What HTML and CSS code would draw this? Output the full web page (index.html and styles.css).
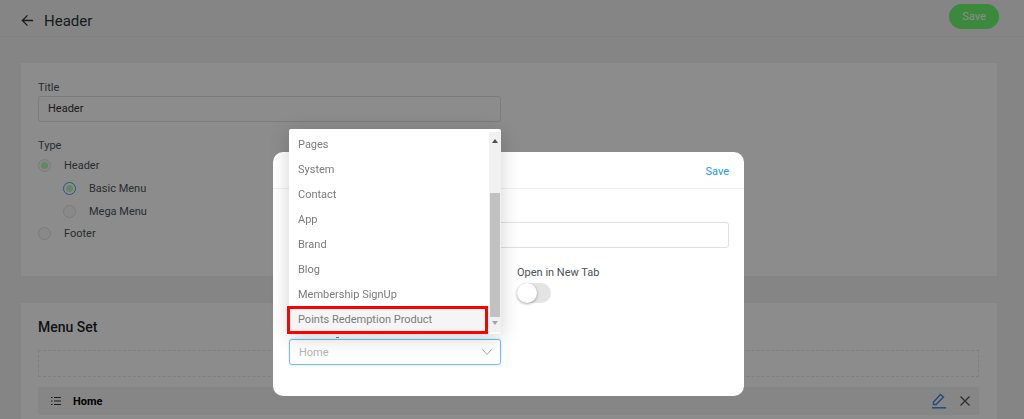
FILE: index.html
```html
<!DOCTYPE html>
<html lang="en">
<head>
    <meta charset="UTF-8">
    <meta name="viewport" content="width=device-width, initial-scale=1.0">
    <title>Header</title>
    <link rel="stylesheet" href="styles.css">
</head>
<body>
    <div class="page">
        <div class="top-bar">
            <div class="top-title">
                <svg class="back-icon" width="13" height="13" viewBox="0 0 14 14"><path d="M13 7H2M7 1.500 1.500 7 7 12.500" fill="none" stroke="#2b3238" stroke-width="1.400"/></svg>
                <span>Header</span>
            </div>
            <button class="save-btn">Save</button>
        </div>

        <div class="card card-form">
            <label class="field-label">Title</label>
            <div class="text-input">Header</div>
            <label class="field-label type-label">Type</label>
            <div class="radio-row"><span class="radio checked"></span>Header</div>
            <div class="radio-row sub"><span class="radio checked blue"></span>Basic Menu</div>
            <div class="radio-row sub"><span class="radio"></span>Mega Menu</div>
            <div class="radio-row last"><span class="radio"></span>Footer</div>
        </div>

        <div class="card card-menu">
            <h2 class="card-title">Menu Set</h2>
            <div class="drop-zone"></div>
            <div class="menu-row">
                <svg class="list-icon" width="10" height="8" viewBox="0 0 10 8"><path d="M0 .5h1.500M3 .5h7M0 4h1.500M3 4h7M0 7.500h1.500M3 7.500h7" stroke="#333" stroke-width="1" fill="none"/></svg>
                <span class="menu-name">Home</span>
                <svg class="edit-icon" width="14" height="16" viewBox="0 0 14 16"><path d="M1.500 11.500V9L8.500 1.500 11.500 4 4 11.500Z" fill="none" stroke="#3a8de0" stroke-width="1.400"/><path d="M0 14.800h14" stroke="#3a8de0" stroke-width="1.500"/></svg>
                <svg class="close-icon" width="10" height="10" viewBox="0 0 10 10"><path d="M.5.500l9 9M9.500.500l-9 9" stroke="#555" stroke-width="1.300"/></svg>
            </div>
        </div>
    </div>

    <div class="overlay">
        <div class="modal">
            <div class="modal-head"><a class="modal-save">Save</a></div>
            <div class="modal-body">
                <div class="field-label"></div>
                <div class="text-input light"></div>
                <div class="modal-row">
                    <div class="modal-col"></div>
                    <div class="modal-col">
                        <label class="field-label">Open in New Tab</label>
                        <span class="toggle"><span class="knob"></span></span>
                    </div>
                </div>
                <div class="field-label select-label"></div>
                <div class="select">Home
                    <svg width="10" height="6" viewBox="0 0 10 6"><path d="M.5.500 5 5.500 9.500.500" fill="none" stroke="#aaa" stroke-width="1"/></svg>
                </div>
            </div>

            <div class="dropdown">
                <ul class="options">
                    <li>Pages</li>
                    <li>System</li>
                    <li>Contact</li>
                    <li>App</li>
                    <li>Brand</li>
                    <li>Blog</li>
                    <li>Membership SignUp</li>
                    <li class="active">Points Redemption Product</li>
                </ul>
                <div class="scrollbar">
                    <span class="arrow up"></span>
                    <span class="thumb"></span>
                    <span class="arrow down"></span>
                </div>
            </div>
        </div>
    </div>
</body>
</html>
```

FILE: styles.css
```css
* {
    box-sizing: border-box;
}
body {
    margin: 0;
    height: 419px;
    overflow: hidden;
    background: #f2f2f2;
    font-family: Roboto, sans-serif;
    font-size: 11px;
    color: #4a5158;
}
.page {
    height: 419px;
    overflow: hidden;
}
.top-bar {
    height: 37px;
    display: flex;
    justify-content: space-between;
    border-bottom: 1px solid #ececec;
    padding: 4px 25px 0 21px;
}
.top-title {
    display: flex;
    align-items: center;
    gap: 10px;
    height: 33px;
    font-size: 15px;
    color: #2b3238;
}
.save-btn {
    width: 50px;
    height: 25px;
    border: none;
    border-radius: 13px;
    background: #6bf970;
    color: #fff;
    font-family: Roboto, sans-serif;
    font-size: 11px;
}
.card {
    margin: 25px 26px 0 20px;
    padding: 16px 18px 16px 17px;
    background: #fff;
    border: 1px solid #f0f0f0;
}
.card-form {
    height: 215px;
}
.field-label {
    display: block;
    height: 17px;
    line-height: 17px;
    font-size: 11px;
    color: #4a5158;
}
.text-input {
    height: 26px;
    width: 463px;
    line-height: 24px;
    padding: 0 9px;
    border: 1px solid #e0e0e0;
    border-radius: 3px;
    color: #333;
}
.type-label {
    margin-top: 15px;
}
.radio-row {
    display: flex;
    align-items: center;
    gap: 13px;
    height: 23px;
    color: #4a5158;
}
.radio-row.sub {
    margin-left: 25px;
}
.radio-row.last {
    margin-top: -1px;
}
.radio {
    width: 13px;
    height: 13px;
    border: 1px solid #e0e0e0;
    border-radius: 50%;
    background: #fafafa;
    display: flex;
    align-items: center;
    justify-content: center;
}
.radio.checked::after {
    content: "";
    width: 7px;
    height: 7px;
    border-radius: 50%;
    background: #b4f5b8;
}
.radio.blue {
    border-color: #4a9be0;
    background: #fff;
}
.card-menu {
    height: 130px;
    padding-top: 15px;
}
.card-title {
    margin: 0;
    height: 18px;
    line-height: 18px;
    font-size: 14px;
    font-weight: 500;
    color: #1e2429;
}
.drop-zone {
    margin-top: 14px;
    height: 27px;
    border: 1px dashed #e8e8e8;
}
.menu-row {
    margin-top: 10px;
    height: 28px;
    display: flex;
    align-items: center;
    padding: 0 9px 0 13px;
    background: #f4f4f4;
}
.menu-name {
    margin-left: 12px;
    flex: 1;
    font-weight: 700;
    font-size: 11px;
    color: #000;
}
.edit-icon {
    margin-right: 14px;
}
.overlay {
    position: fixed;
    top: 0;
    left: 0;
    width: 1024px;
    height: 419px;
    background: rgba(0, 0, 0, 0.45);
}
.modal {
    position: absolute;
    left: 273px;
    top: 152px;
    width: 471px;
    height: 244px;
    background: #fff;
    border-radius: 10px;
}
.modal-head {
    height: 37px;
    display: flex;
    justify-content: flex-end;
    align-items: center;
    padding: 3px 15px 0 0;
    border-bottom: 1px solid #f0f0f0;
}
.modal-save {
    color: #2196f3;
    font-size: 11px;
}
.modal-body {
    padding: 16px 15px 0 16px;
}
.modal-body .text-input {
    width: 440px;
}
.modal-row {
    display: flex;
    gap: 16px;
    margin-top: 16px;
    height: 39px;
}
.modal-col {
    width: 212px;
}
.toggle {
    display: block;
    margin-top: 2px;
    width: 34px;
    height: 20px;
    border-radius: 10px;
    background: #e4e4e4;
}
.knob {
    display: block;
    width: 20px;
    height: 20px;
    border-radius: 50%;
    background: #fff;
    box-shadow: 0 1px 3px rgba(0, 0, 0, 0.35);
}
.select-label {
    margin-top: 19px;
    position: relative;
}
/* bit of the hidden label that pokes out under the list */
.select-label::after {
    content: "";
    position: absolute;
    left: 47px;
    top: 15px;
    width: 3px;
    height: 1px;
    background: #777;
}
.select {
    width: 212px;
    height: 26px;
    display: flex;
    align-items: center;
    justify-content: space-between;
    padding: 0 8px 0 9px;
    border: 1px solid #73bdf5;
    border-radius: 3px;
    box-shadow: 0 0 2px #b5dcfa;
    color: #b5b5b5;
}
.dropdown {
    position: absolute;
    left: 16px;
    top: -23px;
    width: 212px;
    height: 205px;
    display: flex;
    background: #fff;
    border-radius: 2px;
    box-shadow: 0 4px 20px rgba(0, 0, 0, 0.18);
}
.options {
    list-style: none;
    margin: 0;
    padding: 3px 0 0;
    width: 200px;
}
.options li {
    height: 25px;
    line-height: 26px;
    padding-left: 9px;
    color: #7b7b7b;
}
.options li.active {
    position: relative;
    background: #f5f5f5;
}
/* red box from the screenshot */
.options li.active::after {
    content: "";
    box-sizing: border-box;
    position: absolute;
    left: -2px;
    right: 1px;
    top: -1px;
    height: 28px;
    border: 3px solid #f00;
}
.scrollbar {
    margin-top: 3px;
    width: 12px;
    height: 200px;
    padding: 0 1px;
    background: #f1f1f1;
    display: flex;
    flex-direction: column;
    align-items: center;
}
.arrow {
    width: 0;
    height: 0;
    margin: 7px 0;
    border-left: 3px solid transparent;
    border-right: 3px solid transparent;
}
.arrow.up {
    border-bottom: 4px solid #505050;
}
.arrow.down {
    margin-top: 4px;
    border-top: 4px solid #a3a3a3;
}
.thumb {
    width: 100%;
    height: 126px;
    margin-top: 43px;
    background: #c1c1c1;
}
```
